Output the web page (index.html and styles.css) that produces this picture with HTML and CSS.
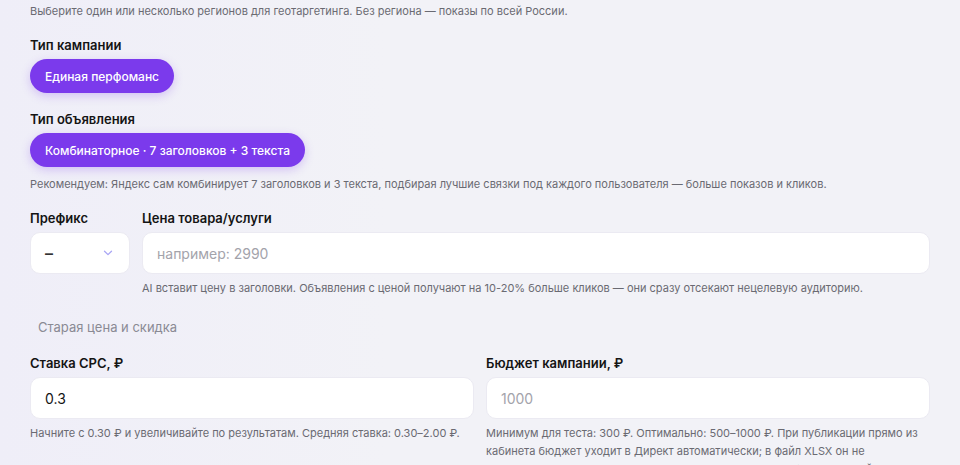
FILE: index.html
```html
<!DOCTYPE html>
<html lang="ru">
<head>
<meta charset="utf-8">
<link rel="stylesheet" href="styles.css">
</head>
<body>
<div class="page">
  <p class="hint hint-top">Выберите один или несколько регионов для геотаргетинга. Без региона — показы по всей России.</p>

  <div class="field">
    <div class="label">Тип кампании</div>
    <div class="chips"><button class="chip">Единая перфоманс</button></div>
  </div>

  <div class="field">
    <div class="label">Тип объявления</div>
    <div class="chips"><button class="chip">Комбинаторное · 7 заголовков + 3 текста</button></div>
    <p class="hint">Рекомендуем: Яндекс сам комбинирует 7 заголовков и 3 текста, подбирая лучшие связки под каждого пользователя — больше показов и кликов.</p>
  </div>

  <div class="price-row">
    <div class="col-prefix">
      <div class="label">Префикс</div>
      <div class="select">
        <span class="select-value">–</span>
        <svg class="chev" width="10" height="6" viewBox="0 0 10 6"><path d="M1.5 1.2 L5 4.6 L8.5 1.2" fill="none" stroke="#a9a6f5" stroke-width="1.3" stroke-linecap="round" stroke-linejoin="round"/></svg>
      </div>
    </div>
    <div class="col-price">
      <div class="label">Цена товара/услуги</div>
      <div class="input placeholder">например: 2990</div>
      <p class="hint">AI вставит цену в заголовки. Объявления с ценой получают на 10-20% больше кликов — они сразу отсекают нецелевую аудиторию.</p>
    </div>
  </div>

  <button class="toggle">Старая цена и скидка</button>

  <div class="two-col">
    <div>
      <div class="label">Ставка CPC, ₽</div>
      <div class="input">0.3</div>
      <p class="hint">Начните с 0.30 ₽ и увеличивайте по результатам. Средняя ставка: 0.30–2.00 ₽.</p>
    </div>
    <div>
      <div class="label">Бюджет кампании, ₽</div>
      <div class="input placeholder">1000</div>
      <p class="hint">Минимум для теста: 300 ₽. Оптимально: 500–1000 ₽. При публикации прямо из кабинета бюджет уходит в Директ автоматически; в файл XLSX он не записывается — формат Коммандера не поддерживает бюджет, задайте его вручную в кампании.</p>
    </div>
  </div>
</div>
</body>
</html>
```

FILE: styles.css
```css
* { box-sizing: border-box; }
html, body { margin: 0; padding: 0; }
body {
  background: linear-gradient(90deg, #efeef8 0%, #f2f2f7 40%, #f2f2f7 100%);
  font-family: Inter, "Noto Sans", sans-serif;
  color: #141414;
  height: 465px;
  overflow: hidden;
}
.page {
  width: 900px;
  margin-left: 30px;
  padding-top: 3px;
}
p { margin: 0; }
.hint {
  font-size: 11px;
  line-height: 16px;
  color: #6a6a72;
}
.hint-top { margin-bottom: 17px; }
.field { margin-bottom: 17px; }
.label {
  font-size: 13px;
  font-weight: 600;
  line-height: 18px;
  margin-bottom: 5px;
  color: #141414;
}
.chips { display: flex; gap: 8px; }
.chip {
  height: 34px;
  border: none;
  border-radius: 17px;
  padding: 0 15px;
  background: #7b3aec;
  color: #fff;
  font-family: inherit;
  font-size: 12px;
  font-weight: 500;
  box-shadow: 0 3px 10px rgba(124, 58, 237, 0.25);
}
.field .hint { margin-top: 9px; }
.price-row {
  display: flex;
  gap: 12px;
  margin-bottom: 22px;
}
.col-prefix { width: 100px; flex: none; }
.col-price { flex: 1; }
.input, .select {
  height: 42px;
  background: #fff;
  border: 1px solid #ebeaf2;
  border-radius: 10px;
  padding: 0 14px;
  display: flex;
  align-items: center;
  font-size: 14px;
  color: #141414;
}
.select { justify-content: space-between; padding-right: 16px; }
.select-value { font-size: 16px; font-weight: 600; color: #333; }
.placeholder { color: #a3a3ab; }
.col-price .hint, .two-col .hint { margin-top: 6px; }
.toggle {
  border: none;
  background: transparent;
  font-family: inherit;
  font-size: 13px;
  color: #8a8a94;
  padding: 0 8px;
  height: 18px;
  line-height: 18px;
  display: block;
  margin-bottom: 18px;
}
.two-col {
  display: grid;
  grid-template-columns: 1fr 1fr;
  gap: 12px;
}
.two-col .hint { line-height: 18px; margin-top: 5px; }
```
